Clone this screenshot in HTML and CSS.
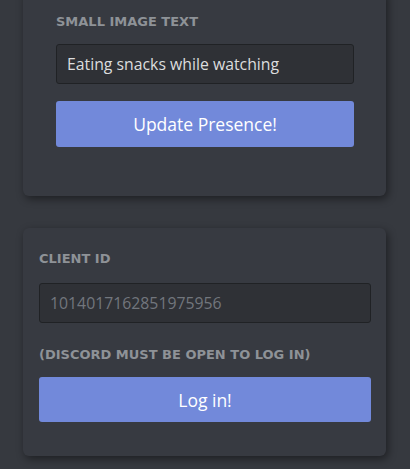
FILE: index.html
```html
<!DOCTYPE html>
<html>
<head>
<meta charset="utf-8">
<link rel="stylesheet" href="styles.css">
</head>
<body>
<main class="page">
  <section class="card card-presence">
    <label class="label" for="small-text">SMALL IMAGE TEXT</label>
    <input class="input input-first" id="small-text" type="text" value="Eating snacks while watching">
    <button class="btn btn-presence">Update Presence!</button>
  </section>
  <section class="card card-login">
    <label class="label" for="client-id">CLIENT ID</label>
    <input class="input" id="client-id" type="text" placeholder="1014017162851975956">
    <p class="label label-note">(DISCORD MUST BE OPEN TO LOG IN)</p>
    <button class="btn btn-login">Log in!</button>
  </section>
</main>
</body>
</html>
```
FILE: styles.css
```css
html, body {
  margin: 0;
  padding: 0;
  background: #36393f;
  height: 100%;
  overflow: hidden;
}
.page {
  display: flex;
  flex-direction: column;
  gap: 32px;
  padding: 0 24px 0 23px;
  margin-top: -10px;
}
.card {
  background: #373a41;
  border-radius: 6px;
  box-shadow: 2px 3px 8px rgba(0, 0, 0, 0.45);
  display: flex;
  flex-direction: column;
}
.card-presence {
  padding: 24px 32px 49px 33px;
}
.card-login {
  padding: 23px 15px 34px 16px;
}
.label {
  display: block;
  margin: 0;
  font-family: "DejaVu Sans", Verdana, sans-serif;
  font-weight: bold;
  font-size: 13px;
  line-height: 16px;
  color: #8e9297;
}
.input {
  box-sizing: border-box;
  height: 40px;
  margin-top: 16px;
  padding: 0 10px;
  background: #2f3136;
  border: 1px solid #202225;
  border-radius: 3px;
  color: #dcddde;
  font-family: "Open Sans", sans-serif;
  font-size: 15.8px;
  outline: none;
  width: 100%;
}
.input-first {
  margin-top: 14px;
}
.input::placeholder {
  color: #72767d;
}
.label-note {
  margin-top: 24px;
}
.btn {
  border: none;
  border-radius: 3px;
  background: #7289da;
  color: #ffffff;
  font-family: "Open Sans", sans-serif;
  font-size: 17.5px;
  cursor: pointer;
  width: 100%;
}
.btn-presence {
  height: 46px;
  margin-top: 17px;
}
.btn-login {
  height: 45px;
  margin-top: 14px;
}
```
